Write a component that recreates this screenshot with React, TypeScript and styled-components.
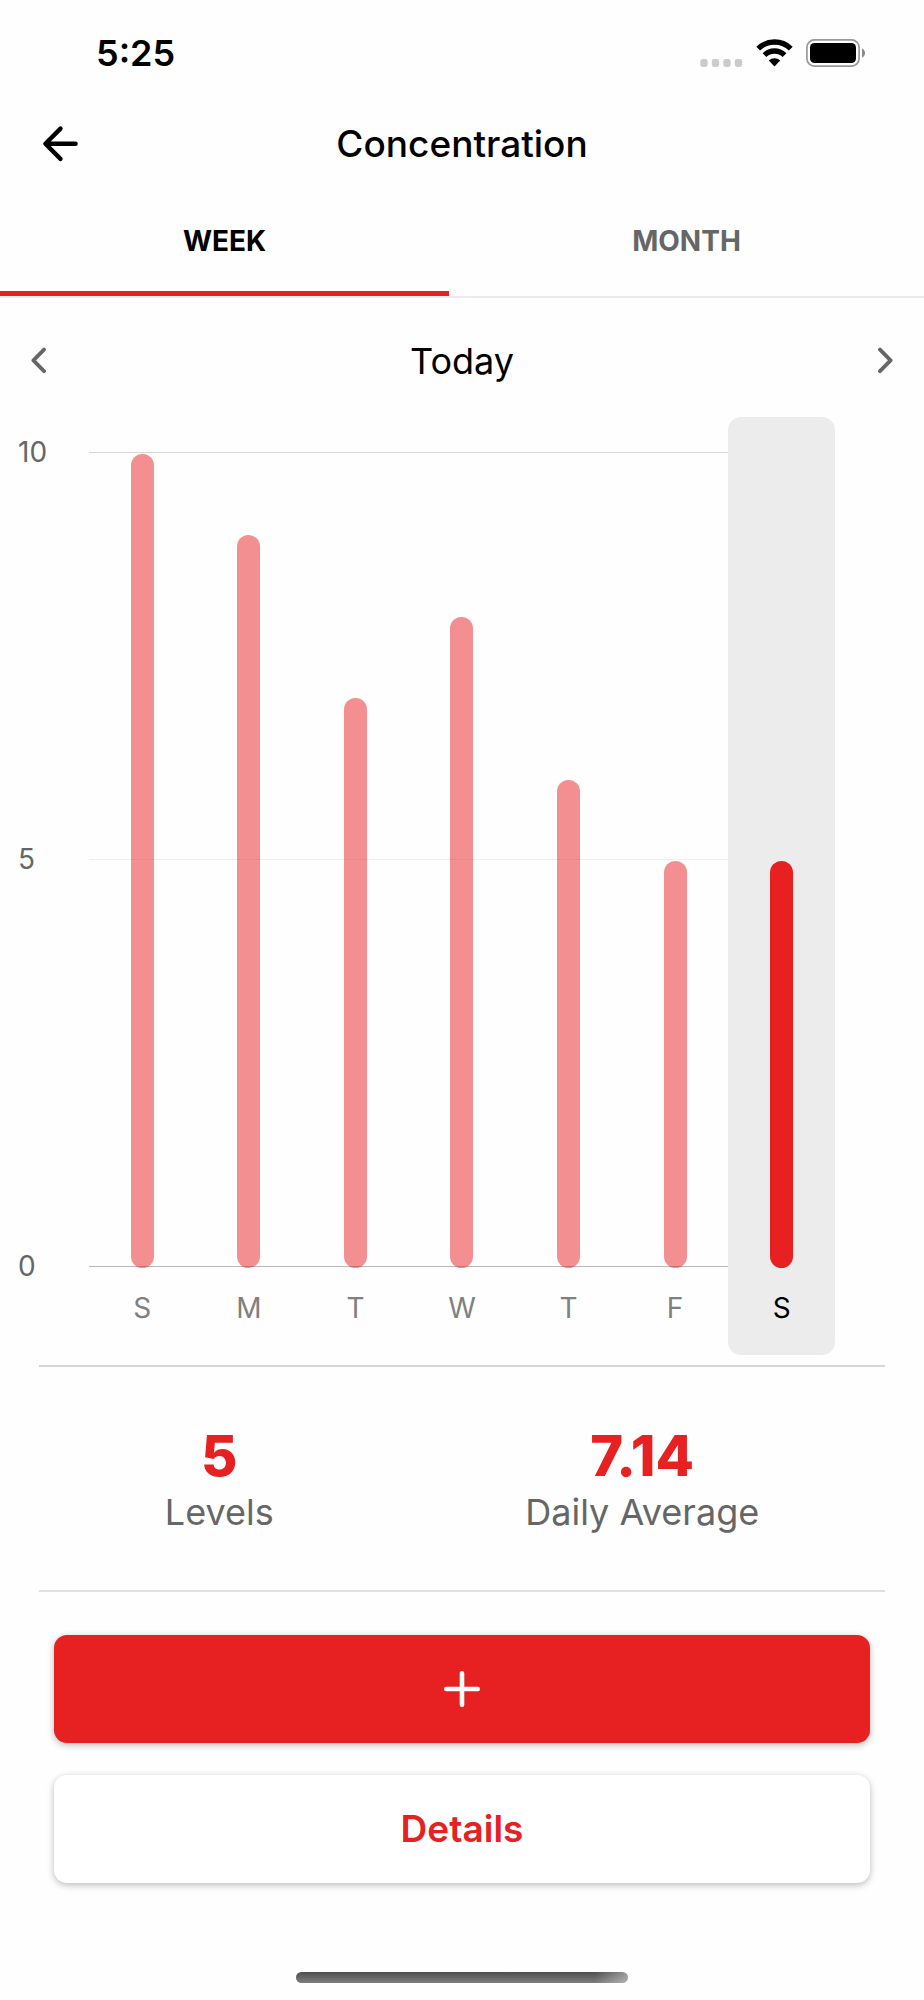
import React, { useState } from "react";
import styled, { createGlobalStyle } from "styled-components";

const RED = "#e72022";
const GRAY = "#666666";

const GlobalStyle = createGlobalStyle`
  *, *::before, *::after { box-sizing: border-box; }
  body {
    margin: 0;
    background: #fefefe;
    color: #000;
    font-family: Inter, "Liberation Sans", sans-serif;
  }
  button {
    margin: 0;
    padding: 0;
    border: 0;
    background: none;
    color: inherit;
    font: inherit;
    cursor: pointer;
  }
  svg { display: block; }
`;

const Screen = styled.div`
  display: flex;
  flex-direction: column;
  min-height: 100vh;
`;

const StatusBar = styled.div`
  display: flex;
  align-items: center;
  justify-content: space-between;
  height: 105px;
  padding: 0 58px 0 96px;
`;

const Clock = styled.time`
  font-size: 36px;
  line-height: 44px;
  font-weight: 600;
`;

const StatusIcons = styled.div`
  display: flex;
  align-items: center;
  gap: 13px;
`;

const Header = styled.header`
  display: grid;
  grid-template-columns: 1fr auto 1fr;
  align-items: center;
  height: 77px;
  padding: 0 40px;
`;

const Title = styled.h1`
  margin: 0;
  font-size: 37px;
  line-height: 48px;
  font-weight: 500;
`;

const IconButton = styled.button`
  justify-self: start;
  display: flex;
`;

const Tabs = styled.div`
  display: flex;
  height: 116px;
  border-bottom: 2px solid #ebebeb;
`;

const Tab = styled.button<{ $active: boolean; $grow: number }>`
  flex: ${(p) => p.$grow} 1 0;
  padding-top: 8px;
  border-bottom: 5px solid ${(p) => (p.$active ? RED : "transparent")};
  color: ${(p) => (p.$active ? "#000" : GRAY)};
  font-size: 28px;
  line-height: 36px;
  font-weight: 700;
`;

const RangeNav = styled.nav`
  display: flex;
  align-items: center;
  justify-content: space-between;
  height: 119px;
  padding: 6px 31px 0;
  color: ${GRAY};
`;

const RangeTitle = styled.h2`
  margin: 0;
  color: #000;
  font-size: 36px;
  line-height: 48px;
  font-weight: 400;
`;

const Chart = styled.section`
  display: grid;
  grid-template-columns: 89px 1fr 89px;
`;

const Axis = styled.div`
  display: flex;
  flex-direction: column;
  justify-content: space-between;
  height: 850px;
  margin-top: 17px;
  padding-left: 18px;
  color: ${GRAY};
  font-size: 28px;
  line-height: 36px;
`;

const Plot = styled.div`
  display: grid;
`;

const GridLines = styled.div`
  grid-area: 1 / 1;
  display: flex;
  flex-direction: column;
  justify-content: space-between;
  height: 815px;
  margin-top: 35px;
`;

const GridLine = styled.div<{ $color: string }>`
  height: 1px;
  background: ${(p) => p.$color};
`;

const Days = styled.div`
  grid-area: 1 / 1;
  display: grid;
  grid-template-columns: repeat(7, 1fr);
`;

const Day = styled.button<{ $active: boolean }>`
  display: flex;
  flex-direction: column;
  align-items: center;
  padding: 37px 0 29px;
  border-radius: 13px;
  background: ${(p) => (p.$active ? "#ececec" : "transparent")};
  color: ${(p) => (p.$active ? "#000" : "#808080")};
  font-size: 28px;
  line-height: 36px;
`;

const BarTrack = styled.span`
  display: flex;
  align-items: flex-end;
  height: 814px;
  margin-bottom: 22px;
`;

const Bar = styled.span<{ $active: boolean }>`
  width: 23px;
  border-radius: 12px;
  background: ${(p) => (p.$active ? RED : "rgba(231, 32, 34, 0.5)")};
`;

const Stats = styled.section`
  display: flex;
  justify-content: space-around;
  margin: 10px 39px 0;
  padding: 56px 0 54px;
  border-top: 2px solid #d6d6d6;
  border-bottom: 2px solid #e0e0e0;
`;

const Stat = styled.div`
  display: flex;
  flex-direction: column;
  align-items: center;
`;

const StatValue = styled.strong`
  color: ${RED};
  font-size: 56px;
  line-height: 66px;
  font-weight: 800;
`;

const StatLabel = styled.span`
  color: ${GRAY};
  font-size: 36px;
  line-height: 47px;
`;

const Actions = styled.div`
  display: flex;
  flex-direction: column;
  gap: 32px;
  padding: 43px 54px 0;
`;

const ActionButton = styled.button<{ $primary?: boolean }>`
  display: flex;
  align-items: center;
  justify-content: center;
  height: 108px;
  border-radius: 13px;
  background: ${(p) => (p.$primary ? RED : "#fff")};
  color: ${(p) => (p.$primary ? "#fff" : RED)};
  box-shadow: 0 2px 7px rgba(0, 0, 0, 0.27);
  font-size: 37px;
  line-height: 48px;
  font-weight: 600;
`;

const HomeIndicator = styled.div`
  width: 36%;
  height: 11px;
  margin: auto auto 17px;
  border-radius: 6px;
  background: linear-gradient(to right, transparent 90%, rgba(255, 255, 255, 0.4)),
    linear-gradient(#4e4e4e, #7e7e7e);
`;

const week = [
  { id: "sun", label: "S", value: 10 },
  { id: "mon", label: "M", value: 9 },
  { id: "tue", label: "T", value: 7 },
  { id: "wed", label: "W", value: 8 },
  { id: "thu", label: "T", value: 6 },
  { id: "fri", label: "F", value: 5 },
  { id: "sat", label: "S", value: 5 },
];

const tabs = [
  { label: "WEEK", grow: 449 },
  { label: "MONTH", grow: 475 },
];

const SignalDots = () => (
  <svg width="43" height="28" viewBox="0 0 43 28" fill="#cbcbcb" aria-hidden="true">
    {[0, 11.5, 23, 34.5].map((x) => (
      <rect key={x} x={x + 0.3} y="20" width="7.4" height="8" rx="2.4" />
    ))}
  </svg>
);

const Wifi = () => (
  <svg width="37" height="28" viewBox="0 0 37 28" aria-hidden="true">
    <g fill="none" stroke="#000" strokeWidth="5.4">
      <path d="M2.2 9.6A23.5 23.5 0 0 1 34.8 9.6" />
      <path d="M8.5 16.1A14.3 14.3 0 0 1 28.5 16.1" />
    </g>
    <path d="M12.8 21.5A8.2 8.2 0 0 1 24.2 21.5L18.5 27.4Z" />
  </svg>
);

const Battery = () => (
  <svg width="60" height="28" viewBox="0 0 60 28" aria-hidden="true">
    <rect x="0.9" y="0.9" width="52.2" height="26.2" rx="7.5" fill="none" stroke="#999" strokeWidth="1.7" />
    <rect x="4" y="4" width="46" height="20" rx="4.6" />
    <path d="M56 9.6C60 11.4 60 17 56 18.8Z" fill="#8a8a8a" />
  </svg>
);

const Arrow = () => (
  <svg width="40" height="40" viewBox="0 0 40 40" fill="none" stroke="currentColor" strokeWidth="4.4" strokeLinecap="round" strokeLinejoin="round" aria-hidden="true">
    <path d="M20.5 4.6L5.4 19.8L20.5 34.9M6 19.8H35.6" />
  </svg>
);

const Chevron = ({ right }: { right?: boolean }) => (
  <svg width="15" height="27" viewBox="0 0 15 27" fill="none" stroke="currentColor" strokeWidth="3.8" strokeLinecap="round" strokeLinejoin="round" aria-hidden="true">
    <path d={right ? "M2 2.6L12.6 13.4L2 24.2" : "M13 2.6L2.4 13.4L13 24.2"} />
  </svg>
);

const Plus = () => (
  <svg width="36" height="36" viewBox="0 0 36 36" fill="none" stroke="currentColor" strokeWidth="4.6" strokeLinecap="round" aria-hidden="true">
    <path d="M18 2.3V33.7M2.3 18H33.7" />
  </svg>
);

export default function App() {
  const [tab, setTab] = useState("WEEK");
  const [day, setDay] = useState("sat");

  return (
    <>
      <GlobalStyle />
      <Screen>
        <StatusBar>
          <Clock>5:25</Clock>
          <StatusIcons>
            <SignalDots />
            <Wifi />
            <Battery />
          </StatusIcons>
        </StatusBar>
        <Header>
          <IconButton aria-label="Back">
            <Arrow />
          </IconButton>
          <Title>Concentration</Title>
        </Header>
        <Tabs role="tablist">
          {tabs.map((t) => (
            <Tab
              key={t.label}
              role="tab"
              aria-selected={tab === t.label}
              $active={tab === t.label}
              $grow={t.grow}
              onClick={() => setTab(t.label)}
            >
              {t.label}
            </Tab>
          ))}
        </Tabs>
        <RangeNav>
          <IconButton aria-label="Previous week">
            <Chevron />
          </IconButton>
          <RangeTitle>Today</RangeTitle>
          <IconButton aria-label="Next week">
            <Chevron right />
          </IconButton>
        </RangeNav>
        <Chart aria-label="Concentration by day">
          <Axis>
            <span>10</span>
            <span>5</span>
            <span>0</span>
          </Axis>
          <Plot>
            <GridLines>
              <GridLine $color="#d6d6d6" />
              <GridLine $color="#efefef" />
              <GridLine $color="#b8b8b8" />
            </GridLines>
            <Days>
              {week.map((d) => (
                <Day key={d.id} $active={day === d.id} onClick={() => setDay(d.id)}>
                  <BarTrack>
                    <Bar $active={day === d.id} style={{ height: `${d.value * 10}%` }} />
                  </BarTrack>
                  {d.label}
                </Day>
              ))}
            </Days>
          </Plot>
        </Chart>
        <Stats>
          <Stat>
            <StatValue>5</StatValue>
            <StatLabel>Levels</StatLabel>
          </Stat>
          <Stat>
            <StatValue>7.14</StatValue>
            <StatLabel>Daily Average</StatLabel>
          </Stat>
        </Stats>
        <Actions>
          <ActionButton $primary aria-label="Add entry">
            <Plus />
          </ActionButton>
          <ActionButton>Details</ActionButton>
        </Actions>
        <HomeIndicator />
      </Screen>
    </>
  );
}
